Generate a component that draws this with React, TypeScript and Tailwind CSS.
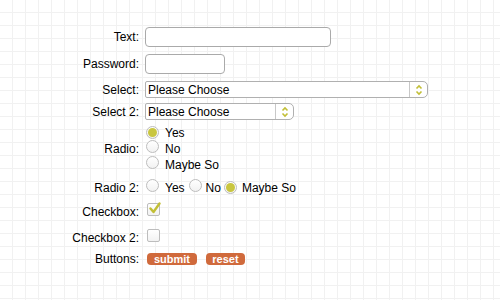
import React from "react";

const Radio = ({ checked }: { checked?: boolean }) => (
  <span className="relative inline-flex h-[13px] w-[13px] shrink-0 items-center justify-center rounded-full border border-[#bdbdbd] bg-gradient-to-b from-white to-[#f2f2f2]">
    {checked && <span className="h-[9px] w-[9px] rounded-full bg-[#c9c640]" />}
  </span>
);

const Check = ({ checked }: { checked?: boolean }) => (
  <span className="relative inline-flex h-[13px] w-[13px] shrink-0 rounded-[2px] border border-[#bdbdbd] bg-gradient-to-b from-white to-[#f2f2f2]">
    {checked && (
      <svg className="absolute left-[1px] top-[-2px]" width="12" height="12" viewBox="0 0 12 12">
        <polyline points="1.5,6.5 4.5,10 10.5,1.5" fill="none" stroke="#c2bf36" strokeWidth="2.4" strokeLinecap="round" strokeLinejoin="round" />
      </svg>
    )}
  </span>
);

const Arrows = () => (
  <svg width="8" height="12" viewBox="0 0 8 12">
    <polyline points="1.5,4.5 4,2 6.5,4.5" fill="none" stroke="#c2bf36" strokeWidth="1.6" />
    <polyline points="1.5,7.5 4,10 6.5,7.5" fill="none" stroke="#c2bf36" strokeWidth="1.6" />
  </svg>
);

const Select = ({ w }: { w: string }) => (
  <div className={`flex h-[17px] ${w} items-stretch rounded-l-[2px] rounded-r-[5px] border border-[#b0b0b0] bg-white`}>
    <span className="flex flex-1 items-center pl-[2px] leading-none">Please Choose</span>
    <span className="flex w-[18px] items-center justify-center border-l border-[#c8c8c8]">
      <Arrows />
    </span>
  </div>
);

const Row = ({ label, children, cls }: { label: string; children: React.ReactNode; cls: string }) => (
  <div className={`flex items-center ${cls}`}>
    <div className="w-[139px] shrink-0 text-right">{label}</div>
    <div className="ml-[6px] flex items-center">{children}</div>
  </div>
);

export default function App() {
  return (
    <div
      className="h-[300px] w-[500px] overflow-hidden bg-white bg-[image:linear-gradient(to_right,#f1f1f1_1px,transparent_1px),linear-gradient(to_bottom,#f1f1f1_1px,transparent_1px)] bg-[size:13px_13px] bg-[position:12px_12px] pt-[27px] text-[12px] text-black"
      style={{ fontFamily: '"Liberation Sans", Arial, sans-serif' }}
    >
      <Row label="Text:" cls="h-[20px]">
        <div className="h-[20px] w-[186px] rounded-[4px] border border-[#aaaaaa] bg-white" />
      </Row>
      <Row label="Password:" cls="mt-[7px] h-[20px]">
        <div className="h-[20px] w-[80px] rounded-[4px] border border-[#aaaaaa] bg-white" />
      </Row>
      <Row label="Select:" cls="mt-[7px] h-[17px]">
        <Select w="w-[283px]" />
      </Row>
      <Row label="Select 2:" cls="mt-[5px] h-[17px]">
        <Select w="w-[149px]" />
      </Row>
      <Row label="Radio:" cls="mt-[5px] h-[48px]">
        <div className="flex flex-col">
          <label className="flex h-[16px] items-center gap-[6px]"><span className="ml-[1px]"><Radio checked /></span>Yes</label>
          <label className="flex h-[16px] items-center gap-[6px]"><span className="ml-[1px]"><Radio /></span>No</label>
          <label className="flex h-[16px] items-center gap-[6px]"><span className="ml-[1px]"><Radio /></span>Maybe So</label>
        </div>
      </Row>
      <Row label="Radio 2:" cls="mt-[7px] h-[16px]">
        <span className="ml-[1px]"><Radio /></span>
        <span className="ml-[6px]">Yes</span>
        <span className="ml-[4px]"><Radio /></span>
        <span className="ml-[4px]">No</span>
        <span className="ml-[3px]"><Radio checked /></span>
        <span className="ml-[5px]">Maybe So</span>
      </Row>
      <Row label="Checkbox:" cls="mt-[8px] h-[16px]">
        <span className="ml-[2px]"><Check checked /></span>
      </Row>
      <Row label="Checkbox 2:" cls="mt-[10px] h-[16px]">
        <span className="ml-[2px]"><Check /></span>
      </Row>
      <Row label="Buttons:" cls="mt-[5px] h-[16px]">
        <button className="ml-[2px] flex h-[12px] w-[50px] items-center justify-center rounded-[4px] bg-[#d06a3c] text-[11px] font-bold leading-none text-white">submit</button>
        <button className="ml-[9px] flex h-[12px] w-[39px] items-center justify-center rounded-[4px] bg-[#d06a3c] text-[11px] font-bold leading-none text-white">reset</button>
      </Row>
    </div>
  );
}
